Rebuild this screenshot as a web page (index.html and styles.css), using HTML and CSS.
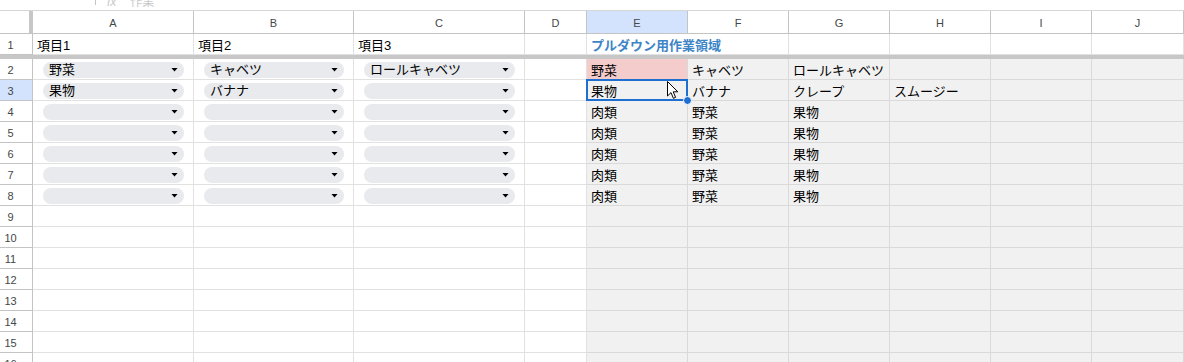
FILE: index.html
```html
<!DOCTYPE html>
<html lang="ja">
<head>
<meta charset="utf-8">
<link rel="stylesheet" href="styles.css">
</head>
<body>
<div class="topbar">
  <div class="topdiv"></div>
  <div class="toptext"><span class="fx">fx</span><span>作業</span></div>
</div>
<div class="sheet">
  <div class="corner"></div>
  <div class="ch">A</div><div class="ch">B</div><div class="ch">C</div><div class="ch">D</div><div class="ch csel">E</div><div class="ch">F</div><div class="ch">G</div><div class="ch">H</div><div class="ch">I</div><div class="ch">J</div>

  <div class="rh">1</div>
  <div class="c">項目1</div><div class="c">項目2</div><div class="c">項目3</div><div class="c"></div>
  <div class="c title">プルダウン用作業領域</div><div class="c"></div><div class="c"></div><div class="c"></div><div class="c"></div><div class="c"></div>

  <div class="freeze"></div>

  <div class="rh">2</div>
  <div class="c"><div class="pill"><span class="pt">野菜</span><span class="arr"></span></div></div>
  <div class="c"><div class="pill"><span class="pt">キャベツ</span><span class="arr"></span></div></div>
  <div class="c"><div class="pill"><span class="pt">ロールキャベツ</span><span class="arr"></span></div></div>
  <div class="c"></div>
  <div class="c g pink">野菜</div><div class="c g">キャベツ</div><div class="c g">ロールキャベツ</div><div class="c g"></div><div class="c g"></div><div class="c g"></div>

  <div class="rh rsel">3</div>
  <div class="c"><div class="pill"><span class="pt">果物</span><span class="arr"></span></div></div>
  <div class="c"><div class="pill"><span class="pt">バナナ</span><span class="arr"></span></div></div>
  <div class="c"><div class="pill"><span class="pt"></span><span class="arr"></span></div></div>
  <div class="c"></div>
  <div class="c g active">果物
    <div class="selbox"></div>
    <div class="handle"></div>
    <svg class="cursor" width="13" height="20" viewBox="0 0 13 20"><path d="M1.5 1.5 L1.5 16 L5 12.6 L7.4 18.3 L9.6 17.4 L7.2 11.8 L11.8 11.8 Z" fill="#fff" stroke="#000" stroke-width="1" stroke-linejoin="round"/></svg>
  </div>
  <div class="c g">バナナ</div><div class="c g">クレープ</div><div class="c g">スムージー</div><div class="c g"></div><div class="c g"></div>

  <div class="rh">4</div>
  <div class="c"><div class="pill"><span class="pt"></span><span class="arr"></span></div></div>
  <div class="c"><div class="pill"><span class="pt"></span><span class="arr"></span></div></div>
  <div class="c"><div class="pill"><span class="pt"></span><span class="arr"></span></div></div>
  <div class="c"></div>
  <div class="c g">肉類</div><div class="c g">野菜</div><div class="c g">果物</div><div class="c g"></div><div class="c g"></div><div class="c g"></div>

  <div class="rh">5</div>
  <div class="c"><div class="pill"><span class="pt"></span><span class="arr"></span></div></div>
  <div class="c"><div class="pill"><span class="pt"></span><span class="arr"></span></div></div>
  <div class="c"><div class="pill"><span class="pt"></span><span class="arr"></span></div></div>
  <div class="c"></div>
  <div class="c g">肉類</div><div class="c g">野菜</div><div class="c g">果物</div><div class="c g"></div><div class="c g"></div><div class="c g"></div>

  <div class="rh">6</div>
  <div class="c"><div class="pill"><span class="pt"></span><span class="arr"></span></div></div>
  <div class="c"><div class="pill"><span class="pt"></span><span class="arr"></span></div></div>
  <div class="c"><div class="pill"><span class="pt"></span><span class="arr"></span></div></div>
  <div class="c"></div>
  <div class="c g">肉類</div><div class="c g">野菜</div><div class="c g">果物</div><div class="c g"></div><div class="c g"></div><div class="c g"></div>

  <div class="rh">7</div>
  <div class="c"><div class="pill"><span class="pt"></span><span class="arr"></span></div></div>
  <div class="c"><div class="pill"><span class="pt"></span><span class="arr"></span></div></div>
  <div class="c"><div class="pill"><span class="pt"></span><span class="arr"></span></div></div>
  <div class="c"></div>
  <div class="c g">肉類</div><div class="c g">野菜</div><div class="c g">果物</div><div class="c g"></div><div class="c g"></div><div class="c g"></div>

  <div class="rh">8</div>
  <div class="c"><div class="pill"><span class="pt"></span><span class="arr"></span></div></div>
  <div class="c"><div class="pill"><span class="pt"></span><span class="arr"></span></div></div>
  <div class="c"><div class="pill"><span class="pt"></span><span class="arr"></span></div></div>
  <div class="c"></div>
  <div class="c g">肉類</div><div class="c g">野菜</div><div class="c g">果物</div><div class="c g"></div><div class="c g"></div><div class="c g"></div>

  <div class="rh">9</div>
  <div class="c"></div><div class="c"></div><div class="c"></div><div class="c"></div>
  <div class="c g"></div><div class="c g"></div><div class="c g"></div><div class="c g"></div><div class="c g"></div><div class="c g"></div>

  <div class="rh">10</div>
  <div class="c"></div><div class="c"></div><div class="c"></div><div class="c"></div>
  <div class="c g"></div><div class="c g"></div><div class="c g"></div><div class="c g"></div><div class="c g"></div><div class="c g"></div>

  <div class="rh">11</div>
  <div class="c"></div><div class="c"></div><div class="c"></div><div class="c"></div>
  <div class="c g"></div><div class="c g"></div><div class="c g"></div><div class="c g"></div><div class="c g"></div><div class="c g"></div>

  <div class="rh">12</div>
  <div class="c"></div><div class="c"></div><div class="c"></div><div class="c"></div>
  <div class="c g"></div><div class="c g"></div><div class="c g"></div><div class="c g"></div><div class="c g"></div><div class="c g"></div>

  <div class="rh">13</div>
  <div class="c"></div><div class="c"></div><div class="c"></div><div class="c"></div>
  <div class="c g"></div><div class="c g"></div><div class="c g"></div><div class="c g"></div><div class="c g"></div><div class="c g"></div>

  <div class="rh">14</div>
  <div class="c"></div><div class="c"></div><div class="c"></div><div class="c"></div>
  <div class="c g"></div><div class="c g"></div><div class="c g"></div><div class="c g"></div><div class="c g"></div><div class="c g"></div>

  <div class="rh">15</div>
  <div class="c"></div><div class="c"></div><div class="c"></div><div class="c"></div>
  <div class="c g"></div><div class="c g"></div><div class="c g"></div><div class="c g"></div><div class="c g"></div><div class="c g"></div>

  <div class="rh">16</div>
  <div class="c"></div><div class="c"></div><div class="c"></div><div class="c"></div>
  <div class="c g"></div><div class="c g"></div><div class="c g"></div><div class="c g"></div><div class="c g"></div><div class="c g"></div>
</div>
</body>
</html>
```

FILE: styles.css
```css
html, body {
  margin: 0;
  padding: 0;
  background: #fff;
}
body {
  width: 1184px;
  height: 362px;
  overflow: hidden;
  font-family: "Liberation Sans", "Noto Sans CJK JP", sans-serif;
}
.topbar {
  height: 10px;
  border-bottom: 1px solid #d6d6d6;
  display: flex;
  align-items: flex-end;
  overflow: hidden;
  padding-left: 95px;
}
.topdiv {
  width: 1px;
  height: 5px;
  background: #c4c4c4;
  align-self: flex-start;
}
.toptext {
  display: flex;
  gap: 14px;
  margin-left: 11px;
  height: 16px;
  line-height: 16px;
  font-size: 12px;
  color: #c8c8c8;
  flex-shrink: 0;
}
.fx {
  font-style: italic;
}
.sheet {
  display: grid;
  grid-template-columns: 33px 161px 160px 171px 62px 101px 101px 101px 101px 101px 92px;
  grid-template-rows: 23px 21px 4px repeat(15, 21px);
}
.corner {
  box-sizing: border-box;
  border-right: 4px solid #c7c7c7;
  border-bottom: 1px solid #c4c4c4;
}
.ch {
  box-sizing: border-box;
  border-right: 1px solid #c4c4c4;
  border-bottom: 1px solid #c4c4c4;
  font-size: 11px;
  color: #444746;
  display: flex;
  align-items: center;
  justify-content: center;
  padding-top: 1px;
}
.csel {
  background: #d3e3fd;
}
.rh {
  box-sizing: border-box;
  border-right: 1px solid #c4c4c4;
  border-bottom: 1px solid #c4c4c4;
  font-size: 11px;
  color: #444746;
  display: flex;
  align-items: center;
  justify-content: center;
  padding-right: 11px;
  padding-top: 1px;
}
.rsel {
  background: #d3e3fd;
}
.freeze {
  grid-column: 1 / -1;
  background: #c7c7c7;
}
.c {
  box-sizing: border-box;
  border-right: 1px solid #e1e1e1;
  border-bottom: 1px solid #e1e1e1;
  font-size: 13px;
  color: #000;
  display: flex;
  align-items: center;
  padding: 1px 3px 0 4px;
  white-space: nowrap;
  position: relative;
}
.title {
  color: #3d85c6;
  font-weight: bold;
  border-right: none;
}
.g {
  background: #f1f1f1;
  border-color: #d9d9d9;
}
.pink {
  background: #f4cccc;
}
.pill {
  flex: 1;
  height: 16px;
  margin: 0 6px 0 6px;
  border-radius: 8px;
  background: #e8eaed;
  display: flex;
  align-items: center;
  justify-content: space-between;
  padding: 0 6px 0 6px;
  box-sizing: border-box;
}
.pt {
  font-size: 13px;
  line-height: 16px;
  color: #000;
}
.arr {
  width: 7px;
  height: 4px;
  background: #000;
  clip-path: polygon(0 0, 100% 0, 50% 100%);
}
.selbox {
  position: absolute;
  left: -1px;
  top: -1px;
  right: -1px;
  bottom: -1px;
  border: 2px solid #1f6fd1;
  pointer-events: none;
}
.handle {
  position: absolute;
  right: -5px;
  bottom: -5px;
  width: 7px;
  height: 7px;
  border-radius: 50%;
  background: #1f6fd1;
  border: 1px solid #fff;
  z-index: 2;
}
.cursor {
  position: absolute;
  left: 79px;
  top: 0px;
  z-index: 3;
}
```
